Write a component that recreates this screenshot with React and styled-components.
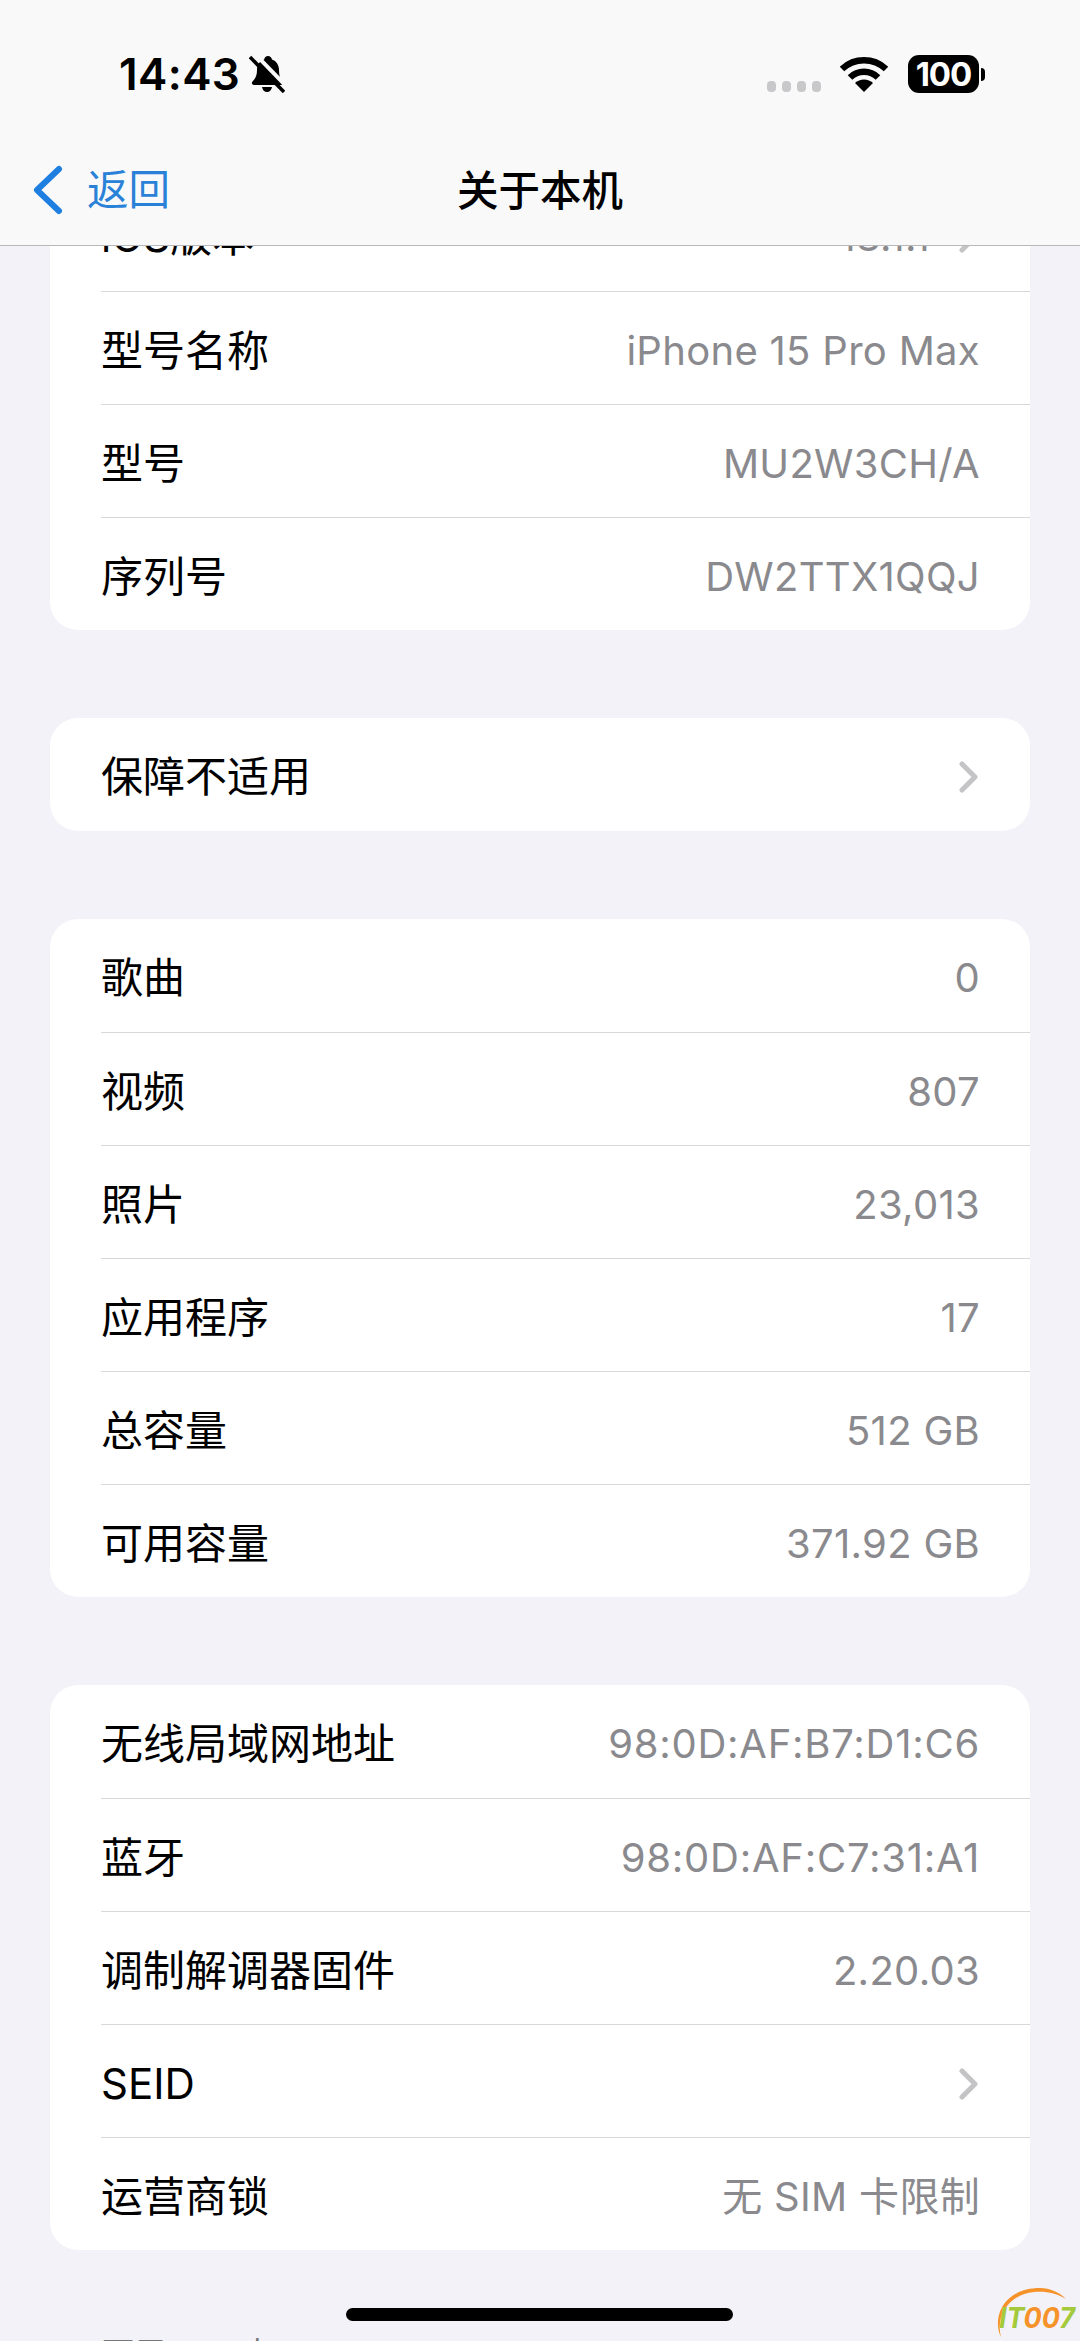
import React from 'react'
import styled, { createGlobalStyle } from 'styled-components'

const GlobalStyle = createGlobalStyle`
  html, body {
    margin: 0;
    padding: 0;
    background: #f2f2f8;
  }
  * {
    box-sizing: border-box;
  }
`

const FONT = `Inter, "Noto Sans CJK SC", sans-serif`

const Screen = styled.div`
  position: relative;
  width: 1080px;
  height: 2341px;
  overflow: hidden;
  background: #f2f2f8;
  font-family: ${FONT};
  color: #000;
`

const Scroller = styled.div`
  display: flex;
  flex-direction: column;
  gap: 88px;
  padding: 178px 50px 0;
`

const Card = styled.div`
  background: #fff;
  border-radius: 28px;
  padding-left: 51px;
  overflow: hidden;
`

const Row = styled.div`
  display: flex;
  align-items: center;
  justify-content: space-between;
  height: 113px;
  padding: 5px 50px 0 0;
  font-size: 42px;
  line-height: 50px;
  & + & {
    border-top: 1.5px solid #d8d8da;
  }
`

const RowEnd = styled.div`
  display: flex;
  align-items: center;
  gap: 28px;
`

const Value = styled.span`
  color: #8a8a8e;
  font-size: 40px;
  letter-spacing: ${props => (props.$spread ? '0.75px' : '0.3px')};
`

const Chevron = styled.svg`
  width: 20px;
  height: 34px;
  margin-right: 2px;
  fill: none;
  stroke: #c4c4c6;
  stroke-width: 5;
  stroke-linecap: round;
  stroke-linejoin: round;
`

const FootNote = styled.div`
  margin-top: -6px;
  padding-left: 52px;
  font-size: 32px;
  line-height: 44px;
  color: #77777b;
`

const Nav = styled.div`
  position: absolute;
  top: 0;
  left: 0;
  width: 100%;
  height: 246px;
  display: flex;
  flex-direction: column;
  background: #f9f9fa;
  border-bottom: 1.5px solid #b8b8ba;
`

const StatusBar = styled.div`
  display: flex;
  align-items: center;
  justify-content: space-between;
  height: 146px;
  padding: 2px 95px 0 119px;
`

const StatusLeft = styled.div`
  display: flex;
  align-items: center;
  gap: 9px;
`

const Clock = styled.span`
  font-size: 44px;
  font-weight: 600;
  letter-spacing: 0.4px;
  line-height: 50px;
`

const StatusRight = styled.div`
  display: flex;
  align-items: center;
`

const Dots = styled.div`
  display: flex;
  gap: 6px;
  margin: 24px 19px 0 0;
`

const Dot = styled.span`
  width: 9px;
  height: 11px;
  border-radius: 4px;
  background: #c8c8ca;
`

const Battery = styled.div`
  display: flex;
  align-items: center;
  margin-left: 20px;
`

const BatteryBody = styled.div`
  width: 71px;
  height: 38px;
  border-radius: 11px;
  background: #000;
  color: #fff;
  font-size: 33px;
  font-weight: 700;
  line-height: 38px;
  letter-spacing: -1px;
  text-align: center;
`

const BatteryCap = styled.span`
  width: 4px;
  height: 13px;
  margin-left: 2px;
  border-radius: 0 6px 6px 0;
  background: #000;
`

const TitleBar = styled.div`
  position: relative;
  flex: 1;
  display: flex;
  align-items: center;
  justify-content: center;
  padding-bottom: 10px;
`

const Back = styled.div`
  position: absolute;
  left: 33px;
  top: 19px;
  display: flex;
  align-items: center;
  gap: 24px;
  color: #2a82d8;
  font-size: 41.5px;
  line-height: 50px;
`

const Title = styled.span`
  font-size: 41.5px;
  font-weight: 500;
  line-height: 50px;
`

const HomeBar = styled.div`
  position: absolute;
  left: 346px;
  top: 2308px;
  width: 387px;
  height: 13px;
  border-radius: 7px;
  background: #000;
`

const Watermark = styled.svg`
  position: absolute;
  right: 0;
  bottom: 0;
  width: 90px;
  height: 56px;
`

const groups = [
  [
    ['iOS版本', '18.1.1', true],
    ['型号名称', 'iPhone 15 Pro Max'],
    ['型号', 'MU2W3CH/A'],
    ['序列号', 'DW2TTX1QQJ'],
  ],
  [['保障不适用', '', true]],
  [
    ['歌曲', '0'],
    ['视频', '807'],
    ['照片', '23,013'],
    ['应用程序', '17'],
    ['总容量', '512 GB'],
    ['可用容量', '371.92 GB'],
  ],
  [
    ['无线局域网地址', '98:0D:AF:B7:D1:C6'],
    ['蓝牙', '98:0D:AF:C7:31:A1'],
    ['调制解调器固件', '2.20.03'],
    ['SEID', '', true],
    ['运营商锁', '无 SIM 卡限制'],
  ],
]

const App = () => (
  <Screen>
    <GlobalStyle />
    <Scroller>
      {groups.map((rows, i) => (
        <Card key={i}>
          {rows.map(([label, value, more]) => (
            <Row key={label}>
              <span>{label}</span>
              <RowEnd>
                {value && <Value $spread={value.includes(':')}>{value}</Value>}
                {more && (
                  <Chevron viewBox="0 0 20 34">
                    <path d="M4 4 L17 17 L4 30" />
                  </Chevron>
                )}
              </RowEnd>
            </Row>
          ))}
        </Card>
      ))}
      <FootNote>可用 SIM 卡</FootNote>
    </Scroller>

    <Nav>
      <StatusBar>
        <StatusLeft>
          <Clock>14:43</Clock>
          <svg width="36" height="38" viewBox="0 0 36 38">
            <path
              d="M19 1c-2 0-3.500 1.500-3.800 3.500C10.500 6 8 10 8 15c0 5-1.500 8.500-4.500 11.500-1.300 1.500-.5 3.500 1.500 3.500h27c1.800 0 2.500-1.700 1.500-3C31 24 30 20 30 15c0-5-2.500-9-7-10.500C22.500 2.500 21 1 19 1zM13 32c.5 3 2.500 5 5 5s4.500-2 5-5z"
              fill="#000"
            />
            <path d="M5 -2 L39 33" stroke="#f9f9fa" strokeWidth="4" />
            <path d="M1 2 L35 37" stroke="#000" strokeWidth="3.500" />
          </svg>
        </StatusLeft>
        <StatusRight>
          <Dots>
            <Dot />
            <Dot />
            <Dot />
            <Dot />
          </Dots>
          <svg width="48" height="36" viewBox="0 0 48 36">
            <path d="M2 13 A32 32 0 0 1 46 13" fill="none" stroke="#000" strokeWidth="6.500" />
            <path d="M10 21.500 A20 20 0 0 1 38 21.500" fill="none" stroke="#000" strokeWidth="6.500" />
            <path d="M15 27 A13 13 0 0 1 33 27 L24 36 Z" fill="#000" />
          </svg>
          <Battery>
            <BatteryBody>100</BatteryBody>
            <BatteryCap />
          </Battery>
        </StatusRight>
      </StatusBar>
      <TitleBar>
        <Back>
          <svg width="30" height="50" viewBox="0 0 30 50">
            <path
              d="M26 4 L4 25 L26 46"
              fill="none"
              stroke="#1f7fe0"
              strokeWidth="6"
              strokeLinecap="round"
              strokeLinejoin="round"
            />
          </svg>
          <span>返回</span>
        </Back>
        <Title>关于本机</Title>
      </TitleBar>
    </Nav>

    <HomeBar />

    <Watermark viewBox="0 0 90 56">
      <path d="M11 52 C2 34 12 3 50 3 C60 3 69 7 76 14 C66 8 56 6 44 7 C20 9 5 30 11 52 Z" fill="#f6922a" />
      <text
        x="9"
        y="43"
        textLength="76"
        lengthAdjust="spacingAndGlyphs"
        fontFamily="Inter, sans-serif"
        fontStyle="italic"
        fontWeight="700"
        fontSize="29"
        fill="#a4ca3c"
      >
        IT<tspan fill="#f6922a">00</tspan>7
      </text>
    </Watermark>
  </Screen>
)

export default App
